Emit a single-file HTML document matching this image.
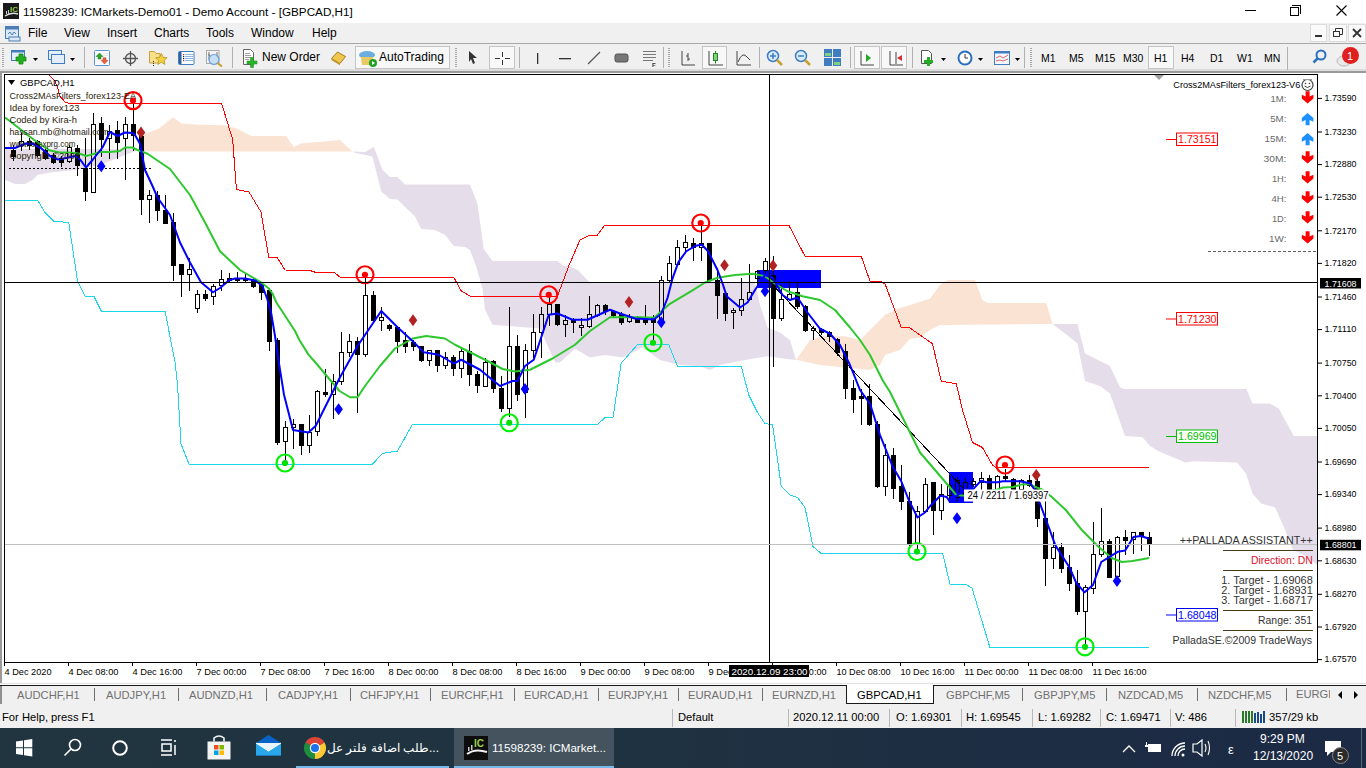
<!DOCTYPE html>
<html><head><meta charset="utf-8">
<style>
*{margin:0;padding:0;box-sizing:border-box}
html,body{width:1366px;height:768px;overflow:hidden;background:#fff;font-family:"Liberation Sans",sans-serif;position:relative}
.a{position:absolute;white-space:nowrap;line-height:1}
.mi{font-size:12px;color:#000;top:27px}
.tt{font-size:12px;top:51px;color:#000}
.tf{font-size:10.5px;top:53px;color:#000}
.sep{position:absolute;width:1px;height:22px;background:#c8c8c8;top:47px}
.tab{position:absolute;font-size:11.2px;color:#707070;top:690px;line-height:1;white-space:nowrap}
.tsep{position:absolute;width:1px;height:13px;background:#707070;top:688px}
.st{position:absolute;font-size:11.2px;color:#000;top:712px;line-height:1;white-space:nowrap}
.ssep{position:absolute;width:1px;height:18px;background:#b8b8b8;top:709px}
.pressed{position:absolute;top:47px;height:23px;border:1px solid #c4c4c4;background:#f7f7f7}
svg text{font-family:"Liberation Sans",sans-serif}
</style></head><body>
<!-- title bar -->
<div class="a" style="left:0;top:0;width:1366px;height:22px;background:#fff"></div>
<svg class="a" style="left:3px;top:3px" width="16" height="16"><rect width="16" height="16" fill="#1a1a1a"/><text x="7" y="9" font-size="8" font-weight="bold" fill="#8fc83c">IC</text><path d="M2 13 Q8 9 15 11" stroke="#ddd" stroke-width="1.5" fill="none"/><rect x="3" y="8" width="1" height="3" fill="#ccc"/><rect x="5" y="7" width="1" height="4" fill="#ccc"/></svg>
<div class="a" style="left:23px;top:6px;font-size:11.7px;color:#000">11598239: ICMarkets-Demo01 - Demo Account - [GBPCAD,H1]</div>
<div class="a" style="left:1245px;top:10px;width:11px;height:1px;background:#000"></div>
<div class="a" style="left:1290px;top:7px;width:9px;height:9px;border:1px solid #000"></div>
<div class="a" style="left:1292px;top:5px;width:9px;height:1px;background:#000"></div>
<div class="a" style="left:1300px;top:5px;width:1px;height:9px;background:#000"></div>
<svg class="a" style="left:1336px;top:5px" width="11" height="11"><path d="M0.5 0.5L10.5 10.5M10.5 0.5L0.5 10.5" stroke="#000" stroke-width="1.1"/></svg>
<!-- menu -->
<div class="a" style="left:0;top:23px;width:1366px;height:21px;background:#f0f0f0"></div>
<svg class="a" style="left:4px;top:25px" width="17" height="17"><rect x="1.5" y="1.5" width="13" height="12" fill="#dbe8f5" stroke="#4a7fb5"/><rect x="1.5" y="1.5" width="13" height="3" fill="#4a7fb5"/><path d="M4 9 l2 -2 2 3 2 -3 2 2" stroke="#4a7fb5" fill="none"/><rect x="5" y="12" width="11" height="4" fill="#dbe8f5" stroke="#4a7fb5"/></svg>
<div class="a mi" style="left:28px">File</div>
<div class="a mi" style="left:64px">View</div>
<div class="a mi" style="left:107px">Insert</div>
<div class="a mi" style="left:154px">Charts</div>
<div class="a mi" style="left:206px">Tools</div>
<div class="a mi" style="left:251px">Window</div>
<div class="a mi" style="left:312px">Help</div>
<!-- mdi buttons -->
<div class="a" style="left:1310px;top:24px;width:17px;height:18px;background:#fafafa;border:1px solid #dcdcdc"></div>
<div class="a" style="left:1315px;top:35px;width:7px;height:2px;background:#333"></div>
<div class="a" style="left:1329px;top:24px;width:18px;height:18px;background:#fafafa;border:1px solid #dcdcdc"></div>
<svg class="a" style="left:1333px;top:28px" width="10" height="10"><rect x="0.5" y="3.5" width="6" height="5" fill="none" stroke="#333"/><path d="M2.5 3.5V0.5H9.5V6.5H6.5" fill="none" stroke="#333"/></svg>
<div class="a" style="left:1348px;top:24px;width:18px;height:18px;background:#fafafa;border:1px solid #dcdcdc"></div>
<svg class="a" style="left:1352px;top:28px" width="10" height="10"><path d="M1 1L9 9M9 1L1 9" stroke="#333" stroke-width="1.8"/></svg>
<!-- toolbar -->
<div class="a" style="left:0;top:43px;width:1366px;height:1px;background:#a8a8a8"></div>
<div class="a" style="left:0;top:44px;width:1366px;height:27px;background:#f0f0f0"></div>
<div class="a" style="left:0;top:69px;width:1366px;height:2px;background:#dcdcdc"></div>
<svg class="a" style="left:0;top:44px" width="1366" height="27">
 <g fill="#a8a8a8">
  <rect x="2" y="4" width="2" height="1"/><rect x="2" y="6" width="2" height="1"/><rect x="2" y="8" width="2" height="1"/><rect x="2" y="10" width="2" height="1"/><rect x="2" y="12" width="2" height="1"/><rect x="2" y="14" width="2" height="1"/><rect x="2" y="16" width="2" height="1"/><rect x="2" y="18" width="2" height="1"/><rect x="2" y="20" width="2" height="1"/><rect x="2" y="22" width="2" height="1"/>
 </g>
 <!-- new chart -->
 <rect x="11.5" y="6.5" width="13" height="10" fill="#e4eefa" stroke="#3f7cc0"/><rect x="11.5" y="6.5" width="13" height="2" fill="#3f7cc0"/>
 <path d="M19 10h4v3h3v4h-3v3h-4v-3h-3v-4h3z" fill="#22b022" stroke="#118811" stroke-width="0.8"/>
 <path d="M33 14h5l-2.5 3z" fill="#000"/>
 <rect x="48.5" y="6.5" width="13" height="9" fill="#e4eefa" stroke="#3f7cc0"/><rect x="51.5" y="10.5" width="13" height="9" fill="#e4eefa" stroke="#3f7cc0"/>
 <path d="M70 14h5l-2.5 3z" fill="#000"/>
 <rect x="84" y="3" width="1" height="21" fill="#b0b0b0"/>
 <rect x="94.5" y="6.5" width="15" height="15" rx="1" fill="#fafcff" stroke="#5a94d8"/><path d="M96 12.5h2v2.5h3v-2.5h2l-3.5-3.5z" fill="#2aa52a" stroke="#1a7a1a" stroke-width="0.5"/><path d="M101 16.3h2v-2.5h3v2.5h2l-3.5 3.7z" fill="#e8603a" stroke="#b84020" stroke-width="0.5"/><path d="M103 9.5h5M103 11.5h5" stroke="#ddd" stroke-width="0.6"/>
 <circle cx="130.5" cy="14.5" r="5" fill="none" stroke="#555" stroke-width="1.3"/><path d="M130.5 7v15M123 14.5h15" stroke="#555" stroke-width="1.3"/>
 <path d="M149.5 7.5h5l1.5 2h4v9.5h-10.5z" fill="#f6e08a" stroke="#c8a040"/><path d="M153.5 17v5" stroke="#333" stroke-dasharray="1,1"/><path d="M161.4 9.5l1.7 3.8 4 .4-3 2.7.9 4-3.6-2.1-3.6 2.1.9-4-3-2.7 4-.4z" fill="#f4d03a" stroke="#b8902a" stroke-width="0.8"/>
 <rect x="178.5" y="7.5" width="15.5" height="13" rx="1" fill="#fff" stroke="#3f7cc0"/><rect x="179" y="8" width="2.5" height="12" fill="#2f5f9f"/><path d="M185 10.5h8M185 12.5h8M185 14.5h8M185 16.5h8" stroke="#8fb4e8" stroke-width="1"/><g fill="#e02020"><rect x="183" y="10" width="1.2" height="1.2"/><rect x="183" y="16" width="1.2" height="1.2"/></g><g fill="#222"><rect x="183" y="12" width="1.2" height="1.2"/><rect x="183" y="14" width="1.2" height="1.2"/></g>
 <rect x="206.5" y="6.5" width="12.5" height="13" fill="#f4f4f4" stroke="#aaa"/><path d="M209 8v8M208 11h2M217 8v6" stroke="#555" stroke-width="0.8"/><circle cx="214" cy="15.5" r="5" fill="rgba(190,220,245,0.85)" stroke="#6fa0d8" stroke-width="1.2"/><path d="M217.5 19l4.5 3.5" stroke="#c8a030" stroke-width="2.2"/>
 <rect x="232" y="3" width="1" height="21" fill="#b0b0b0"/>
 <path d="M243.5 5.5h7l3 3v12h-10z" fill="#fff" stroke="#666"/><path d="M245 9.5h5M245 11.5h6M245 13.5h6M245 15.5h4" stroke="#888" stroke-width="0.8"/><path d="M250.5 13.5h3v3.5h3.5v3h-3.5v3.5h-3v-3.5h-3.5v-3h3.5z" fill="#2ab52a" stroke="#1a8a1a" stroke-width="0.5"/>
 <path d="M331.5 14.5l6-6.5 8 4.5-5.5 7z" fill="#f0c850" stroke="#a87a18"/><path d="M331.5 14.5l8.5 5 0 1.8-8.5-5z" fill="#c89a30"/>
 <rect x="355.5" y="2.5" width="94" height="22" fill="#f8f8f8" stroke="#c4c4c4"/>
 <ellipse cx="367" cy="11" rx="8" ry="4" fill="#6aaee0"/><path d="M361 13h12l-1 8h-10z" fill="#e8c860"/><circle cx="373" cy="19" r="4" fill="#22a022"/><path d="M372 17l3 2-3 2z" fill="#fff"/>
 <g fill="#a8a8a8"><rect x="455" y="4" width="2" height="1"/><rect x="455" y="6" width="2" height="1"/><rect x="455" y="8" width="2" height="1"/><rect x="455" y="10" width="2" height="1"/><rect x="455" y="12" width="2" height="1"/><rect x="455" y="14" width="2" height="1"/><rect x="455" y="16" width="2" height="1"/><rect x="455" y="18" width="2" height="1"/><rect x="455" y="20" width="2" height="1"/><rect x="455" y="22" width="2" height="1"/></g>
 <path d="M469 7l8 7h-4l2 5-2 1-2-5-2 3z" fill="#333"/>
 <rect x="489.5" y="2.5" width="25" height="22" fill="#f8f8f8" stroke="#c4c4c4"/>
 <path d="M502.5 8v5M502.5 16v5M495 14.5h5M505 14.5h5" stroke="#333" stroke-width="1"/>
 <rect x="519" y="3" width="1" height="21" fill="#b0b0b0"/>
 <rect x="537" y="9" width="1.3" height="11" fill="#333"/>
 <rect x="559" y="14" width="12" height="1.3" fill="#333"/>
 <path d="M588 20L600 8" stroke="#555" stroke-width="1.3"/>
 <rect x="615" y="10" width="13" height="8" rx="2" fill="#777" stroke="#555"/>
 <g fill="#777"><rect x="643" y="7" width="13" height="1"/><rect x="643" y="10" width="13" height="1"/><rect x="643" y="13" width="13" height="1"/><rect x="643" y="16" width="10" height="1"/></g><text x="652" y="23" font-size="6" font-weight="bold" fill="#333">F</text>
 <rect x="663" y="3" width="1" height="21" fill="#b0b0b0"/>
 <g fill="#a8a8a8"><rect x="668" y="4" width="2" height="1"/><rect x="668" y="6" width="2" height="1"/><rect x="668" y="8" width="2" height="1"/><rect x="668" y="10" width="2" height="1"/><rect x="668" y="12" width="2" height="1"/><rect x="668" y="14" width="2" height="1"/><rect x="668" y="16" width="2" height="1"/><rect x="668" y="18" width="2" height="1"/><rect x="668" y="20" width="2" height="1"/><rect x="668" y="22" width="2" height="1"/></g>
 <!-- chart type icons -->
 <path d="M682 7v14h13M688 9v8M686 12h2M688 15h2" stroke="#444" fill="none"/>
 <rect x="702.5" y="2.5" width="24" height="22" fill="#f8f8f8" stroke="#c4c4c4"/>
 <path d="M709 7v14h14" stroke="#444" fill="none"/><rect x="713.5" y="9.5" width="4" height="7" fill="#7fd07f" stroke="#228822"/><path d="M715.5 7v2M715.5 16.5v3" stroke="#228822"/>
 <path d="M737 7v14h14M738 18q4 -10 8 -6l4 4" stroke="#444" fill="none"/>
 <rect x="759" y="3" width="1" height="21" fill="#b0b0b0"/>
 <circle cx="773" cy="12" r="5.5" fill="#d8ebfa" stroke="#3f7cc0" stroke-width="1.5"/><path d="M770 12h6M773 9v6" stroke="#3f7cc0" stroke-width="1.5"/><path d="M777 16l5 5" stroke="#c8a030" stroke-width="2.5"/>
 <circle cx="801" cy="12" r="5.5" fill="#d8ebfa" stroke="#3f7cc0" stroke-width="1.5"/><path d="M798 12h6" stroke="#3f7cc0" stroke-width="1.5"/><path d="M805 16l5 5" stroke="#c8a030" stroke-width="2.5"/>
 <rect x="824" y="5" width="8" height="8" fill="#3f7cc0"/><rect x="833" y="5" width="8" height="8" fill="#3f7cc0"/><rect x="824" y="14" width="8" height="8" fill="#3f7cc0"/><rect x="833" y="14" width="8" height="8" fill="#3f7cc0"/><rect x="825" y="9" width="6" height="3" fill="#7fd07f"/><rect x="834" y="18" width="6" height="3" fill="#7fd07f"/>
 <rect x="850" y="3" width="1" height="21" fill="#b0b0b0"/>
 <rect x="854.5" y="2.5" width="25" height="22" fill="#f8f8f8" stroke="#c4c4c4"/>
 <path d="M861 7v14h13" stroke="#444" fill="none"/><path d="M866 10l5 4-5 4z" fill="#22aa22"/>
 <rect x="881.5" y="2.5" width="25" height="22" fill="#f8f8f8" stroke="#c4c4c4"/>
 <path d="M890 7v14h13M896 8v12" stroke="#444" fill="none"/><path d="M897 14l5 -3v6z" fill="#d03030"/>
 <rect x="912" y="3" width="1" height="21" fill="#b0b0b0"/>
 <path d="M921.5 6.5h7l3 3v10h-10z" fill="#fff" stroke="#555"/><path d="M927 13h3v3h3v3h-3v3h-3v-3h-3v-3h3z" fill="#22b022"/>
 <path d="M941 14h5l-2.5 3z" fill="#000"/>
 <circle cx="965" cy="14" r="7.5" fill="#2a6fc0"/><circle cx="965" cy="14" r="5.5" fill="#fff"/><path d="M965 10v4h3" stroke="#333" fill="none"/>
 <path d="M978 14h5l-2.5 3z" fill="#000"/>
 <rect x="994.5" y="7.5" width="15" height="13" fill="#f4f8fc" stroke="#3f7cc0"/><rect x="994.5" y="7.5" width="15" height="2" fill="#3f7cc0"/><path d="M996 14l4-2 3 2 5-3M996 17l4-1 3 1 5-2" stroke="#d04040" stroke-width="0.8" fill="none"/>
 <path d="M1015 14h5l-2.5 3z" fill="#000"/>
 <rect x="1024" y="3" width="1" height="21" fill="#b0b0b0"/>
 <g fill="#a8a8a8"><rect x="1030" y="4" width="2" height="1"/><rect x="1030" y="6" width="2" height="1"/><rect x="1030" y="8" width="2" height="1"/><rect x="1030" y="10" width="2" height="1"/><rect x="1030" y="12" width="2" height="1"/><rect x="1030" y="14" width="2" height="1"/><rect x="1030" y="16" width="2" height="1"/><rect x="1030" y="18" width="2" height="1"/><rect x="1030" y="20" width="2" height="1"/><rect x="1030" y="22" width="2" height="1"/></g>
 <rect x="1148.5" y="2.5" width="25" height="22" fill="#f8f8f8" stroke="#c4c4c4"/>
 <rect x="1287" y="3" width="1" height="23" fill="#b0b0b0"/>
 <circle cx="1321" cy="11" r="4.5" fill="none" stroke="#2a6fc0" stroke-width="2"/><path d="M1317.5 14.5l-4 4" stroke="#2a6fc0" stroke-width="2.5"/>
 <ellipse cx="1344" cy="17" rx="7" ry="5" fill="#e8e8e8" stroke="#bbb"/><circle cx="1350.5" cy="11.5" r="8.5" fill="#e02020"/><text x="1347" y="16" font-size="11" fill="#fff">1</text>
</svg>
<div class="a tt" style="left:262px">New Order</div>
<div class="a tt" style="left:379px">AutoTrading</div>
<div class="a tf" style="left:1041px">M1</div>
<div class="a tf" style="left:1069px">M5</div>
<div class="a tf" style="left:1095px">M15</div>
<div class="a tf" style="left:1123px">M30</div>
<div class="a tf" style="left:1154px">H1</div>
<div class="a tf" style="left:1181px">H4</div>
<div class="a tf" style="left:1210px">D1</div>
<div class="a tf" style="left:1237px">W1</div>
<div class="a tf" style="left:1264px">MN</div>
<!-- chart window frame -->
<div class="a" style="left:0;top:71px;width:1366px;height:613px;background:#fff"></div>
<div class="a" style="left:0;top:71px;width:2px;height:613px;background:#9a9a9a"></div>
<div class="a" style="left:0;top:71px;width:1366px;height:2px;background:#9a9a9a"></div>
<svg class="a" style="left:0;top:0" width="1366" height="768">
<polygon points="5,149 141,149 110,161 100,165 75,170 50,172.5 37.5,175 32.5,180 25,184 15,184 5,180" fill="#E6DDEA"/>
<polygon points="141,149 143,134.7 159,128.5 173,117.3 181.7,123.5 199,124.8 224,125.2 236.4,128.5 251.4,136 286,136 293.7,147 301,143.4 340,140 352.5,151.5 141,151.5" fill="#FBE3D3"/>
<polygon points="352.5,151.5 365,152 373.75,147 377.5,156.5 382.5,170 390,177 397.5,177 405,184.5 470,184.5 477.5,204 483.75,249 492.5,261 557.5,261 563.75,266 567.5,266 577.5,269.75 590,282.5 755,282.5 760,305 767.5,327.5 780,332.5 790,340 796,360 796,360 785,358.75 767.5,356.25 745,360 720,365 710,370 700,366.25 680,365 675,363.75 660,360 642.5,347.5 622.5,357.5 605,355 590,357.5 575,348.75 560,362.5 555,362.25 540,328.5 492.5,324.75 485,309.75 482.5,288.5 476,266 470,250 465,247 453.75,246 445,235 435,230 421.25,229 415,216.5 397.5,199.5 390,199 381.25,191.5 372.5,156.5 355,152.75" fill="#E6DDEA"/>
<polygon points="796,360 810,340 822.5,336.25 845,336.25 860,340 870,330 885,315 897.5,308.75 910,305 930,298.75 940,285 947.5,280 975,280 982.5,300 987.5,303 1046.25,303 1052.5,324 940,325 930,330 920,337.5 910,338.75 900,350 885,355 880,365 870,370 820,365 797.5,360" fill="#FBE3D3"/>
<polygon points="1052.5,324 1077.5,324 1085,353.5 1100,361 1110,366 1120,387.25 1123.75,389 1246.25,389 1252.5,403.5 1270,403.5 1278.75,408.5 1293.75,436 1318,436 1318,565.4 1306.4,556.5 1293,549.8 1284,527.4 1275,507.2 1261.6,503.8 1252.6,493.8 1246,473.6 1237,462.4 1194.4,461.3 1185.4,462.4 1158,451 1149.6,445.6 1142.5,437.25 1125,436 1110,393.5 1100,386 1085,381 1077.5,343.5 1065,333.5" fill="#E6DDEA"/>
<rect x="757" y="270" width="64" height="18" fill="#0000FF"/>
<rect x="949" y="472" width="24" height="30" fill="#0000FF"/>
<line x1="9" y1="168.5" x2="153" y2="168.5" stroke="#000" stroke-width="1" stroke-dasharray="2,2"/>
<path d="M13.5 145V161M21.5 133V141M21.5 146V151M29.5 138V150M37.5 140V157M45.5 147V160M53.5 153V164M61.5 156V167M69.5 145V147M69.5 162V163M77.5 145V176M85.5 138V201M93.5 113V124M101.5 117V157M109.5 125V131M109.5 139V159M117.5 121V159M125.5 117V124M125.5 139V180M133.5 101V151M141.5 135V215M149.5 190V195M149.5 200V223M157.5 191V221M165.5 195V224M173.5 213V281M181.5 264V297M189.5 258V269M189.5 275V291M197.5 290V294M197.5 309V313M205.5 290V301M213.5 284V286M213.5 297V305M221.5 270V279M221.5 286V291M229.5 273V283M237.5 272V283M245.5 274V283M253.5 277V288M261.5 282V300M269.5 288V351M277.5 338V445M285.5 421V427M285.5 442V464M293.5 419V424M293.5 428V449M301.5 424V455M309.5 415V432M309.5 446V453M317.5 390V391M317.5 432V436M325.5 369V397M333.5 374V381M333.5 395V419M341.5 332V352M341.5 382V385M349.5 334V341M349.5 353V357M357.5 337V413M365.5 275V295M365.5 355V357M373.5 291V322M381.5 307V317M381.5 321V331M389.5 324V331M397.5 326V353M405.5 332V353M413.5 340V351M421.5 346V362M429.5 361V366M437.5 350V372M445.5 352V357M445.5 366V369M453.5 355V376M461.5 348V351M461.5 369V378M469.5 344V386M477.5 371V393M485.5 358V362M493.5 360V393M501.5 376V412M509.5 307V346M509.5 409V417M517.5 335V401M525.5 344V350M525.5 393V418M533.5 314V332M533.5 351V358M541.5 307V314M541.5 333V358M549.5 297V304M549.5 315V326M557.5 304V326M565.5 315V320M565.5 325V337M573.5 318V333M581.5 318V325M581.5 328V336M589.5 296V314M589.5 327V328M597.5 304V305M597.5 316V317M605.5 304V315M613.5 310V317M621.5 312V325M629.5 314V317M629.5 322V323M637.5 316V323M645.5 305V325M653.5 315V341M661.5 276V280M661.5 321V322M669.5 256V263M669.5 281V283M677.5 240V247M677.5 265V266M685.5 235V242M685.5 248V252M693.5 238V261M701.5 225V243M701.5 248V261M709.5 243V281M717.5 268V319M725.5 292V321M733.5 308V310M733.5 313V329M741.5 278V299M741.5 311V316M749.5 264V292M749.5 300V301M757.5 270V271M757.5 279V286M765.5 258V261M765.5 271V276M773.5 256V367M781.5 285V299M781.5 319V321M789.5 281V294M789.5 300V301M797.5 282V309M805.5 305V332M813.5 326V328M813.5 331V340M821.5 328V335M829.5 331V342M837.5 338V356M845.5 344V399M853.5 380V413M861.5 389V425M869.5 384V426M877.5 421V488M885.5 444V455M885.5 487V496M893.5 448V499M901.5 465V510M909.5 492V546M917.5 506V511M917.5 545V553M925.5 478V484M925.5 512V513M933.5 482V535M941.5 484V494M941.5 511V520M949.5 475V485M949.5 496V499M957.5 477V480M957.5 498V503M965.5 478V482M965.5 496V499M973.5 478V481M973.5 485V487M981.5 472V478M981.5 483V491M989.5 475V491M997.5 475V476M997.5 490V491M1005.5 469V481M1013.5 478V491M1021.5 479V480M1021.5 490V491M1029.5 475V487M1037.5 474V527M1045.5 501V586M1053.5 532V547M1053.5 559V569M1061.5 543V573M1069.5 555V591M1077.5 570V615M1085.5 585V587M1085.5 612V648M1093.5 522V554M1093.5 589V594M1101.5 508V541M1101.5 555V557M1109.5 539V578M1117.5 536V537M1125.5 530V555M1133.5 540V554M1141.5 532V551M1149.5 532V556" stroke="#000" stroke-width="1" fill="none"/>
<rect x="19.5" y="141.5" width="4" height="4" fill="none" stroke="#000" stroke-width="1"/><rect x="67.5" y="147.5" width="4" height="14" fill="none" stroke="#000" stroke-width="1"/><rect x="91.5" y="124.5" width="4" height="68" fill="none" stroke="#000" stroke-width="1"/><rect x="107.5" y="131.5" width="4" height="7" fill="none" stroke="#000" stroke-width="1"/><rect x="123.5" y="124.5" width="4" height="14" fill="none" stroke="#000" stroke-width="1"/><rect x="147.5" y="195.5" width="4" height="4" fill="none" stroke="#000" stroke-width="1"/><rect x="187.5" y="269.5" width="4" height="5" fill="none" stroke="#000" stroke-width="1"/><rect x="195.5" y="294.5" width="4" height="14" fill="none" stroke="#000" stroke-width="1"/><rect x="211.5" y="286.5" width="4" height="10" fill="none" stroke="#000" stroke-width="1"/><rect x="219.5" y="279.5" width="4" height="6" fill="none" stroke="#000" stroke-width="1"/><rect x="283.5" y="427.5" width="4" height="14" fill="none" stroke="#000" stroke-width="1"/><rect x="291.5" y="424.5" width="4" height="3" fill="none" stroke="#000" stroke-width="1"/><rect x="307.5" y="432.5" width="4" height="13" fill="none" stroke="#000" stroke-width="1"/><rect x="315.5" y="391.5" width="4" height="40" fill="none" stroke="#000" stroke-width="1"/><rect x="331.5" y="381.5" width="4" height="13" fill="none" stroke="#000" stroke-width="1"/><rect x="339.5" y="352.5" width="4" height="29" fill="none" stroke="#000" stroke-width="1"/><rect x="347.5" y="341.5" width="4" height="11" fill="none" stroke="#000" stroke-width="1"/><rect x="363.5" y="295.5" width="4" height="59" fill="none" stroke="#000" stroke-width="1"/><rect x="379.5" y="317.5" width="4" height="3" fill="none" stroke="#000" stroke-width="1"/><rect x="427.5" y="350.5" width="4" height="10" fill="none" stroke="#000" stroke-width="1"/><rect x="443.5" y="357.5" width="4" height="8" fill="none" stroke="#000" stroke-width="1"/><rect x="459.5" y="351.5" width="4" height="17" fill="none" stroke="#000" stroke-width="1"/><rect x="483.5" y="362.5" width="4" height="24" fill="none" stroke="#000" stroke-width="1"/><rect x="507.5" y="346.5" width="4" height="62" fill="none" stroke="#000" stroke-width="1"/><rect x="523.5" y="350.5" width="4" height="42" fill="none" stroke="#000" stroke-width="1"/><rect x="531.5" y="332.5" width="4" height="18" fill="none" stroke="#000" stroke-width="1"/><rect x="539.5" y="314.5" width="4" height="18" fill="none" stroke="#000" stroke-width="1"/><rect x="547.5" y="304.5" width="4" height="10" fill="none" stroke="#000" stroke-width="1"/><rect x="563.5" y="320.5" width="4" height="4" fill="none" stroke="#000" stroke-width="1"/><rect x="579.5" y="325.5" width="4" height="2" fill="none" stroke="#000" stroke-width="1"/><rect x="587.5" y="314.5" width="4" height="12" fill="none" stroke="#000" stroke-width="1"/><rect x="595.5" y="305.5" width="4" height="10" fill="none" stroke="#000" stroke-width="1"/><rect x="627.5" y="317.5" width="4" height="4" fill="none" stroke="#000" stroke-width="1"/><rect x="659.5" y="280.5" width="4" height="40" fill="none" stroke="#000" stroke-width="1"/><rect x="667.5" y="263.5" width="4" height="17" fill="none" stroke="#000" stroke-width="1"/><rect x="675.5" y="247.5" width="4" height="17" fill="none" stroke="#000" stroke-width="1"/><rect x="683.5" y="242.5" width="4" height="5" fill="none" stroke="#000" stroke-width="1"/><rect x="699.5" y="243.5" width="4" height="4" fill="none" stroke="#000" stroke-width="1"/><rect x="731.5" y="310.5" width="4" height="2" fill="none" stroke="#000" stroke-width="1"/><rect x="739.5" y="299.5" width="4" height="11" fill="none" stroke="#000" stroke-width="1"/><rect x="747.5" y="292.5" width="4" height="7" fill="none" stroke="#000" stroke-width="1"/><rect x="755.5" y="271.5" width="4" height="7" fill="none" stroke="#000" stroke-width="1"/><rect x="763.5" y="261.5" width="4" height="9" fill="none" stroke="#000" stroke-width="1"/><rect x="779.5" y="299.5" width="4" height="19" fill="none" stroke="#000" stroke-width="1"/><rect x="787.5" y="294.5" width="4" height="5" fill="none" stroke="#000" stroke-width="1"/><rect x="811.5" y="328.5" width="4" height="2" fill="none" stroke="#000" stroke-width="1"/><rect x="883.5" y="455.5" width="4" height="31" fill="none" stroke="#000" stroke-width="1"/><rect x="915.5" y="511.5" width="4" height="33" fill="none" stroke="#000" stroke-width="1"/><rect x="923.5" y="484.5" width="4" height="27" fill="none" stroke="#000" stroke-width="1"/><rect x="939.5" y="494.5" width="4" height="16" fill="none" stroke="#000" stroke-width="1"/><rect x="947.5" y="485.5" width="4" height="10" fill="none" stroke="#000" stroke-width="1"/><rect x="955.5" y="480.5" width="4" height="17" fill="none" stroke="#000" stroke-width="1"/><rect x="963.5" y="482.5" width="4" height="13" fill="none" stroke="#000" stroke-width="1"/><rect x="971.5" y="481.5" width="4" height="3" fill="none" stroke="#000" stroke-width="1"/><rect x="979.5" y="478.5" width="4" height="4" fill="none" stroke="#000" stroke-width="1"/><rect x="995.5" y="476.5" width="4" height="13" fill="none" stroke="#000" stroke-width="1"/><rect x="1019.5" y="480.5" width="4" height="9" fill="none" stroke="#000" stroke-width="1"/><rect x="1051.5" y="547.5" width="4" height="11" fill="none" stroke="#000" stroke-width="1"/><rect x="1083.5" y="587.5" width="4" height="24" fill="none" stroke="#000" stroke-width="1"/><rect x="1091.5" y="554.5" width="4" height="34" fill="none" stroke="#000" stroke-width="1"/><rect x="1099.5" y="541.5" width="4" height="13" fill="none" stroke="#000" stroke-width="1"/><rect x="1115.5" y="537.5" width="4" height="39" fill="none" stroke="#000" stroke-width="1"/><rect x="1131.5" y="532.5" width="4" height="7" fill="none" stroke="#000" stroke-width="1"/>
<path d="M11 150h5v7h-5zM27 141h5v5h-5zM35 141h5v15h-5zM43 150h5v9h-5zM51 155h5v8h-5zM59 158h5v5h-5zM75 148h5v18h-5zM83 168h5v24h-5zM99 123h5v17h-5zM115 130h5v13h-5zM131 124h5v12h-5zM139 136h5v64h-5zM155 195h5v16h-5zM163 210h5v14h-5zM171 222h5v44h-5zM179 264h5v11h-5zM203 294h5v5h-5zM227 278h5v3h-5zM235 278h5v3h-5zM243 278h5v3h-5zM251 280h5v7h-5zM259 284h5v9h-5zM267 290h5v52h-5zM275 340h5v103h-5zM299 424h5v22h-5zM323 392h5v3h-5zM355 341h5v14h-5zM371 295h5v26h-5zM387 325h5v4h-5zM395 327h5v15h-5zM403 340h5v7h-5zM411 342h5v5h-5zM419 346h5v15h-5zM435 350h5v16h-5zM451 357h5v12h-5zM467 351h5v24h-5zM475 374h5v12h-5zM491 361h5v28h-5zM499 388h5v21h-5zM515 346h5v49h-5zM555 304h5v21h-5zM571 320h5v3h-5zM603 305h5v7h-5zM611 311h5v5h-5zM619 314h5v9h-5zM635 317h5v6h-5zM643 317h5v6h-5zM651 318h5v5h-5zM691 243h5v5h-5zM707 243h5v38h-5zM715 280h5v16h-5zM723 293h5v21h-5zM771 275h5v44h-5zM795 292h5v15h-5zM803 306h5v25h-5zM819 329h5v4h-5zM827 332h5v5h-5zM835 339h5v14h-5zM843 351h5v38h-5zM851 388h5v12h-5zM859 396h5v3h-5zM867 396h5v29h-5zM875 424h5v63h-5zM891 455h5v34h-5zM899 486h5v16h-5zM907 501h5v44h-5zM931 482h5v29h-5zM987 478h5v12h-5zM1003 476h5v3h-5zM1011 479h5v11h-5zM1027 480h5v6h-5zM1035 481h5v38h-5zM1043 518h5v41h-5zM1059 547h5v22h-5zM1067 567h5v17h-5zM1075 583h5v29h-5zM1107 541h5v37h-5zM1123 537h5v4h-5zM1139 532h5v5h-5zM1147 537h5v8h-5z" fill="#000"/>
<polyline points="48.75,75 55,81.25 57.5,87.5 60,96.25 65,101.9 68,103 221.5,103 232.7,139.7 236.4,189.5 249,192 261,212 268.75,257.5 277.5,258 285,270 310,270.5 316,272.5 335,273 340,277.25 453.75,277.25 461.25,291 470,296 557.5,296 568.75,266 580,240 590,235 597.5,235 605,225 788.75,225 805,256.25 861.25,256.25 870,281.25 880,281.25 885,283.75 901.25,327.5 910,328 932.5,343.75 941.25,381.25 956.25,383.75 962.5,410 972.5,442.5 982.5,447.5 992.5,465 995,467 1148.75,467" fill="none" stroke="#FF0000" stroke-width="1" shape-rendering="crispEdges"/>
<polyline points="5,200 37.5,200 45,212.5 53.75,221.25 68.75,222.5 77.5,281 85,296 93.75,296 101.25,311 165,311 175,362 177.5,384 181,444 189,464 372.5,464 382.5,453.5 397.5,451 412.5,424.25 597.5,424.5 605,417.5 613,417.5 621.25,362.5 626.25,357.5 637.5,344.5 668.75,344.5 677.5,366.25 741.25,366.25 748.75,395 757.5,412.5 765,423.75 772.5,424.5 781.25,486.25 790,495 797.5,497.5 805,507.5 813,546.5 820.5,553 942.5,553 950,584 965,584 972,588 990,647.7 1148.7,647.7" fill="none" stroke="#1ED6EC" stroke-width="1" shape-rendering="crispEdges"/>
<line x1="770" y1="282" x2="964" y2="489" stroke="#000" stroke-width="1" shape-rendering="crispEdges"/>
<polyline points="5,117.5 15,125 28.75,136 41.25,145 50,150.6 60,152.5 70,152.5 80,153.75 86,156 90,155 100,152 110,152 120,151 125,147.5 132.5,147.5 137.5,150 147.5,153.75 170,169 190,195 205,222.5 220,251.25 240,270 261,282.25 268.75,288.5 272.5,293.5 276.25,302.25 295,331 299.4,340 308.5,354.6 315,362 339.5,391 350,397.25 357.5,397.25 365,386 380,366 395,348.5 412.5,338.5 426.25,336 445,338.5 455,344.75 470,352.25 490,362.25 502.5,369 515,371.5 530,369.75 552.5,358.5 575,344.75 590,331 610,317.25 640,317.25 654.2,317.7 669,304.4 692.5,290.3 705,282.5 717.5,277.8 735,275 752.5,273.75 765,276.25 775,283.75 787.5,291.25 802.5,296.25 820,300 835,310 850,327.5 860,340 870,355 882.5,380 890,392 907.5,427.5 920,452.5 935,470 950,487.5 956.25,495 964.4,495.8 997.7,489.6 1002.9,487.5 1013.3,487 1021.7,484.4 1030,483.9 1034.2,486.5 1042.5,489.6 1051.25,496.5 1065.8,510 1082.5,530.8 1099.2,547.5 1111.7,558 1122,562 1132.5,561 1149.2,558" fill="none" stroke="#2DC82D" stroke-width="2" stroke-linejoin="round"/>
<polyline points="5,148 15,148 25,143.75 32.5,143.75 41,148 50,156 57.5,159.4 66,158 75,156 80,159.4 86,167.5 92.5,160 102.5,147.5 110,132 117.5,136 125,132.5 132.5,133 135,135 140,143.75 145,170 152.5,186 157.5,197.5 170,215 180,242.5 190,262.5 201,282.25 213,292.25 220,288 228.75,280.4 235,278.5 245,278.5 255,280.4 262.5,286 267.5,299.75 271.25,313.5 275,336 278.75,362 284,394.7 293,430 308.5,432.6 315.8,425.7 339.5,378.3 357.5,346 381.25,311 397.5,327.25 412.5,341 423.75,352.25 438.75,354.75 453.75,363.5 461.25,359.75 480,369.75 500,386 512.5,381 517.5,381 525,366 533.75,359.75 540,341 548.75,314.75 557.5,313.5 572.5,319.75 587.5,319.75 610,309.75 620,313.5 635,318.5 653.75,319.5 661.25,313.75 667.5,298 672.2,279.4 678.4,262.2 686.25,251.25 695.6,245.8 701.9,244.7 708,251.25 717.5,270 722.2,282.5 726.9,296.6 740,307.5 747.5,302.5 755,290 765,275 772.5,277.5 782.5,295 790,300 797.5,297.5 807.5,312.5 820,328.75 830,333.75 840,345 850,365 860,390 870,403.75 880,435 892.5,466.25 901.25,481.25 908.75,500 917.5,517.5 925,512.5 930,506.25 940.4,495.8 946.7,496.9 949.3,501 965.4,489.6 972.7,489.6 981,480.7 986.25,482.3 997.7,482.3 1002.9,481.25 1019.6,481.25 1030,483.3 1034.2,489 1039.4,502 1047,522.5 1055.4,545.4 1070,568.3 1076.25,583 1084.6,592.3 1093,585 1101.25,562 1109.6,556.9 1118,551.7 1125.2,550.6 1133.5,537 1140.8,536 1149.2,538.75" fill="none" stroke="#0000FF" stroke-width="2" stroke-linejoin="round"/>
<circle cx="133" cy="100.6" r="8.5" fill="none" stroke="#FF0000" stroke-width="2.2"/><circle cx="133" cy="100.6" r="3.1" fill="#FF0000"/>
<circle cx="365" cy="274.75" r="8.5" fill="none" stroke="#FF0000" stroke-width="2.2"/><circle cx="365" cy="274.75" r="3.1" fill="#FF0000"/>
<circle cx="548.75" cy="294.75" r="8.5" fill="none" stroke="#FF0000" stroke-width="2.2"/><circle cx="548.75" cy="294.75" r="3.1" fill="#FF0000"/>
<circle cx="700.75" cy="223" r="8.5" fill="none" stroke="#FF0000" stroke-width="2.2"/><circle cx="700.75" cy="223" r="3.1" fill="#FF0000"/>
<circle cx="1005" cy="465" r="8.5" fill="none" stroke="#FF0000" stroke-width="2.2"/><circle cx="1005" cy="465" r="3.1" fill="#FF0000"/>
<circle cx="285" cy="463" r="8.5" fill="none" stroke="#00F000" stroke-width="2.2"/><circle cx="285" cy="463" r="3.1" fill="#00E000"/>
<circle cx="509.25" cy="422.75" r="8.5" fill="none" stroke="#00F000" stroke-width="2.2"/><circle cx="509.25" cy="422.75" r="3.1" fill="#00E000"/>
<circle cx="653" cy="342.75" r="8.5" fill="none" stroke="#00F000" stroke-width="2.2"/><circle cx="653" cy="342.75" r="3.1" fill="#00E000"/>
<circle cx="917" cy="551.5" r="8.5" fill="none" stroke="#00F000" stroke-width="2.2"/><circle cx="917" cy="551.5" r="3.1" fill="#00E000"/>
<circle cx="1085" cy="646.8" r="8.5" fill="none" stroke="#00F000" stroke-width="2.2"/><circle cx="1085" cy="646.8" r="3.1" fill="#00E000"/>
<polygon points="101.25,160.25 105.55,166.25 101.25,172.25 96.95,166.25" fill="#0000FF"/>
<polygon points="338.6,403.3 342.90000000000003,409.3 338.6,415.3 334.3,409.3" fill="#0000FF"/>
<polygon points="525,383 529.3,389 525,395 520.7,389" fill="#0000FF"/>
<polygon points="661.25,316.3 665.55,322.3 661.25,328.3 656.95,322.3" fill="#0000FF"/>
<polygon points="765,285.25 769.3,291.25 765,297.25 760.7,291.25" fill="#0000FF"/>
<polygon points="957,512.25 961.3,518.25 957,524.25 952.7,518.25" fill="#0000FF"/>
<polygon points="1117,575 1121.3,581 1117,587 1112.7,581" fill="#0000FF"/>
<polygon points="141,126.5 145.3,132.5 141,138.5 136.7,132.5" fill="#B22222"/>
<polygon points="413,314.25 417.3,320.25 413,326.25 408.7,320.25" fill="#B22222"/>
<polygon points="629,296 633.3,302 629,308 624.7,302" fill="#B22222"/>
<polygon points="724.5,259.3 728.8,265.3 724.5,271.3 720.2,265.3" fill="#B22222"/>
<polygon points="773,259.5 777.3,265.5 773,271.5 768.7,265.5" fill="#B22222"/>
<polygon points="1036.25,469 1040.55,475 1036.25,481 1031.95,475" fill="#B22222"/>
<line x1="5" y1="282.5" x2="1318" y2="282.5" stroke="#000" stroke-width="1"/>
<line x1="769.5" y1="75" x2="769.5" y2="662" stroke="#000" stroke-width="1"/>
<line x1="5" y1="544.5" x2="1318" y2="544.5" stroke="#C0C0C0" stroke-width="1"/>
<line x1="1208" y1="251.5" x2="1318" y2="251.5" stroke="#606060" stroke-width="1" stroke-dasharray="3,2"/>
<rect x="964" y="489.5" width="85" height="12" fill="#fff"/>
<line x1="949" y1="502.5" x2="973" y2="502.5" stroke="#0000FF"/>
<text x="967.5" y="499" font-size="10" fill="#000" textLength="81" lengthAdjust="spacingAndGlyphs">24 / 2211 / 1.69397</text>
<line x1="1166" y1="139.5" x2="1176" y2="139.5" stroke="#FF0000"/>
<rect x="1176.5" y="133" width="41" height="12.5" fill="#fff" stroke="#FF0000"/>
<text x="1178" y="143.3" font-size="10.5" fill="#FF0000" textLength="38.5" lengthAdjust="spacingAndGlyphs">1.73151</text>
<line x1="1166" y1="319.0" x2="1176" y2="319.0" stroke="#FF0000"/>
<rect x="1176.5" y="312.5" width="41" height="12.5" fill="#fff" stroke="#FF0000"/>
<text x="1178" y="322.8" font-size="10.5" fill="#FF0000" textLength="38.5" lengthAdjust="spacingAndGlyphs">1.71230</text>
<line x1="1166" y1="436.5" x2="1176" y2="436.5" stroke="#00C000"/>
<rect x="1176.5" y="430" width="41" height="12.5" fill="#fff" stroke="#00C000"/>
<text x="1178" y="440.3" font-size="10.5" fill="#00C000" textLength="38.5" lengthAdjust="spacingAndGlyphs">1.69969</text>
<line x1="1166" y1="615.0" x2="1176" y2="615.0" stroke="#0000FF"/>
<rect x="1176.5" y="608.5" width="41" height="12.5" fill="#fff" stroke="#0000FF"/>
<text x="1178" y="618.8" font-size="10.5" fill="#0000FF" textLength="38.5" lengthAdjust="spacingAndGlyphs">1.68048</text>
<rect x="4.5" y="74.5" width="1313" height="588" fill="none" stroke="#000" stroke-width="1"/>
<polygon points="1154,75 1164,75 1159,80" fill="#A0A0A0"/>
<line x1="1318" y1="98.4" x2="1322" y2="98.4" stroke="#000"/>
<text x="1324.5" y="101.2" font-size="9.5" fill="#000" textLength="32" lengthAdjust="spacingAndGlyphs">1.73590</text>
<line x1="1318" y1="132.0" x2="1322" y2="132.0" stroke="#000"/>
<text x="1324.5" y="134.8" font-size="9.5" fill="#000" textLength="32" lengthAdjust="spacingAndGlyphs">1.73230</text>
<line x1="1318" y1="164.6" x2="1322" y2="164.6" stroke="#000"/>
<text x="1324.5" y="167.4" font-size="9.5" fill="#000" textLength="32" lengthAdjust="spacingAndGlyphs">1.72880</text>
<line x1="1318" y1="197.2" x2="1322" y2="197.2" stroke="#000"/>
<text x="1324.5" y="200.0" font-size="9.5" fill="#000" textLength="32" lengthAdjust="spacingAndGlyphs">1.72530</text>
<line x1="1318" y1="230.8" x2="1322" y2="230.8" stroke="#000"/>
<text x="1324.5" y="233.6" font-size="9.5" fill="#000" textLength="32" lengthAdjust="spacingAndGlyphs">1.72170</text>
<line x1="1318" y1="263.4" x2="1322" y2="263.4" stroke="#000"/>
<text x="1324.5" y="266.2" font-size="9.5" fill="#000" textLength="32" lengthAdjust="spacingAndGlyphs">1.71820</text>
<line x1="1318" y1="297.0" x2="1322" y2="297.0" stroke="#000"/>
<text x="1324.5" y="299.8" font-size="9.5" fill="#000" textLength="32" lengthAdjust="spacingAndGlyphs">1.71460</text>
<line x1="1318" y1="329.6" x2="1322" y2="329.6" stroke="#000"/>
<text x="1324.5" y="332.4" font-size="9.5" fill="#000" textLength="32" lengthAdjust="spacingAndGlyphs">1.71110</text>
<line x1="1318" y1="363.1" x2="1322" y2="363.1" stroke="#000"/>
<text x="1324.5" y="365.9" font-size="9.5" fill="#000" textLength="32" lengthAdjust="spacingAndGlyphs">1.70750</text>
<line x1="1318" y1="395.8" x2="1322" y2="395.8" stroke="#000"/>
<text x="1324.5" y="398.6" font-size="9.5" fill="#000" textLength="32" lengthAdjust="spacingAndGlyphs">1.70400</text>
<line x1="1318" y1="428.4" x2="1322" y2="428.4" stroke="#000"/>
<text x="1324.5" y="431.2" font-size="9.5" fill="#000" textLength="32" lengthAdjust="spacingAndGlyphs">1.70050</text>
<line x1="1318" y1="462.0" x2="1322" y2="462.0" stroke="#000"/>
<text x="1324.5" y="464.8" font-size="9.5" fill="#000" textLength="32" lengthAdjust="spacingAndGlyphs">1.69690</text>
<line x1="1318" y1="494.6" x2="1322" y2="494.6" stroke="#000"/>
<text x="1324.5" y="497.4" font-size="9.5" fill="#000" textLength="32" lengthAdjust="spacingAndGlyphs">1.69340</text>
<line x1="1318" y1="528.1" x2="1322" y2="528.1" stroke="#000"/>
<text x="1324.5" y="530.9" font-size="9.5" fill="#000" textLength="32" lengthAdjust="spacingAndGlyphs">1.68980</text>
<line x1="1318" y1="560.8" x2="1322" y2="560.8" stroke="#000"/>
<text x="1324.5" y="563.6" font-size="9.5" fill="#000" textLength="32" lengthAdjust="spacingAndGlyphs">1.68630</text>
<line x1="1318" y1="594.3" x2="1322" y2="594.3" stroke="#000"/>
<text x="1324.5" y="597.1" font-size="9.5" fill="#000" textLength="32" lengthAdjust="spacingAndGlyphs">1.68270</text>
<line x1="1318" y1="627.0" x2="1322" y2="627.0" stroke="#000"/>
<text x="1324.5" y="629.8" font-size="9.5" fill="#000" textLength="32" lengthAdjust="spacingAndGlyphs">1.67920</text>
<line x1="1318" y1="659.6" x2="1322" y2="659.6" stroke="#000"/>
<text x="1324.5" y="662.4" font-size="9.5" fill="#000" textLength="32" lengthAdjust="spacingAndGlyphs">1.67570</text>
<rect x="1320" y="278" width="41" height="10.5" fill="#000"/>
<text x="1324.5" y="286.5" font-size="9.5" fill="#fff" textLength="32" lengthAdjust="spacingAndGlyphs">1.71608</text>
<rect x="1320" y="539.8" width="41" height="10.5" fill="#000"/>
<text x="1324.5" y="548.3" font-size="9.5" fill="#fff" textLength="32" lengthAdjust="spacingAndGlyphs">1.68801</text>
<line x1="4.5" y1="662" x2="4.5" y2="666" stroke="#000"/>
<text x="4.5" y="675" font-size="9.5" fill="#000" textLength="47" lengthAdjust="spacingAndGlyphs">4 Dec 2020</text>
<line x1="68.5" y1="662" x2="68.5" y2="666" stroke="#000"/>
<text x="68.5" y="675" font-size="9.5" fill="#000" textLength="50" lengthAdjust="spacingAndGlyphs">4 Dec 08:00</text>
<line x1="132.5" y1="662" x2="132.5" y2="666" stroke="#000"/>
<text x="132.5" y="675" font-size="9.5" fill="#000" textLength="50" lengthAdjust="spacingAndGlyphs">4 Dec 16:00</text>
<line x1="196.5" y1="662" x2="196.5" y2="666" stroke="#000"/>
<text x="196.5" y="675" font-size="9.5" fill="#000" textLength="50" lengthAdjust="spacingAndGlyphs">7 Dec 00:00</text>
<line x1="260.5" y1="662" x2="260.5" y2="666" stroke="#000"/>
<text x="260.5" y="675" font-size="9.5" fill="#000" textLength="50" lengthAdjust="spacingAndGlyphs">7 Dec 08:00</text>
<line x1="324.5" y1="662" x2="324.5" y2="666" stroke="#000"/>
<text x="324.5" y="675" font-size="9.5" fill="#000" textLength="50" lengthAdjust="spacingAndGlyphs">7 Dec 16:00</text>
<line x1="388.5" y1="662" x2="388.5" y2="666" stroke="#000"/>
<text x="388.5" y="675" font-size="9.5" fill="#000" textLength="50" lengthAdjust="spacingAndGlyphs">8 Dec 00:00</text>
<line x1="452.5" y1="662" x2="452.5" y2="666" stroke="#000"/>
<text x="452.5" y="675" font-size="9.5" fill="#000" textLength="50" lengthAdjust="spacingAndGlyphs">8 Dec 08:00</text>
<line x1="516.5" y1="662" x2="516.5" y2="666" stroke="#000"/>
<text x="516.5" y="675" font-size="9.5" fill="#000" textLength="50" lengthAdjust="spacingAndGlyphs">8 Dec 16:00</text>
<line x1="580.5" y1="662" x2="580.5" y2="666" stroke="#000"/>
<text x="580.5" y="675" font-size="9.5" fill="#000" textLength="50" lengthAdjust="spacingAndGlyphs">9 Dec 00:00</text>
<line x1="644.5" y1="662" x2="644.5" y2="666" stroke="#000"/>
<text x="644.5" y="675" font-size="9.5" fill="#000" textLength="50" lengthAdjust="spacingAndGlyphs">9 Dec 08:00</text>
<line x1="708.5" y1="662" x2="708.5" y2="666" stroke="#000"/>
<text x="708.5" y="675" font-size="9.5" fill="#000" textLength="50" lengthAdjust="spacingAndGlyphs">9 Dec 16:00</text>
<line x1="772.5" y1="662" x2="772.5" y2="666" stroke="#000"/>
<text x="772.5" y="675" font-size="9.5" fill="#000" textLength="54" lengthAdjust="spacingAndGlyphs">10 Dec 00:00</text>
<line x1="836.5" y1="662" x2="836.5" y2="666" stroke="#000"/>
<text x="836.5" y="675" font-size="9.5" fill="#000" textLength="54" lengthAdjust="spacingAndGlyphs">10 Dec 08:00</text>
<line x1="900.5" y1="662" x2="900.5" y2="666" stroke="#000"/>
<text x="900.5" y="675" font-size="9.5" fill="#000" textLength="54" lengthAdjust="spacingAndGlyphs">10 Dec 16:00</text>
<line x1="964.5" y1="662" x2="964.5" y2="666" stroke="#000"/>
<text x="964.5" y="675" font-size="9.5" fill="#000" textLength="54" lengthAdjust="spacingAndGlyphs">11 Dec 00:00</text>
<line x1="1028.5" y1="662" x2="1028.5" y2="666" stroke="#000"/>
<text x="1028.5" y="675" font-size="9.5" fill="#000" textLength="54" lengthAdjust="spacingAndGlyphs">11 Dec 08:00</text>
<line x1="1092.5" y1="662" x2="1092.5" y2="666" stroke="#000"/>
<text x="1092.5" y="675" font-size="9.5" fill="#000" textLength="54" lengthAdjust="spacingAndGlyphs">11 Dec 16:00</text>
<rect x="729" y="665" width="80" height="12" fill="#000"/>
<text x="731.5" y="675" font-size="9.5" fill="#fff" textLength="76" lengthAdjust="spacingAndGlyphs">2020.12.09 23:00</text>
<polygon points="8,80 15,80 11.5,85" fill="#000"/>
<text x="20" y="86" font-size="9.5" fill="#000" textLength="54.6" lengthAdjust="spacingAndGlyphs">GBPCAD,H1</text>
<text x="9.4" y="99.3" font-size="9.5" fill="#2b1d0e" textLength="126.6" lengthAdjust="spacingAndGlyphs">Cross2MAsFilters_forex123-EA</text>
<text x="9.4" y="110.8" font-size="9.5" fill="#2b1d0e" textLength="70" lengthAdjust="spacingAndGlyphs">Idea by forex123</text>
<text x="9.4" y="122.7" font-size="9.5" fill="#2b1d0e" textLength="67.5" lengthAdjust="spacingAndGlyphs">Coded by Kira-h</text>
<text x="9.4" y="134.8" font-size="9.5" fill="#2b1d0e" textLength="99.4" lengthAdjust="spacingAndGlyphs">hassan.mb@hotmail.com</text>
<text x="9.4" y="147" font-size="9.5" fill="#2b1d0e" textLength="66" lengthAdjust="spacingAndGlyphs">www.forexprg.com</text>
<text x="9.4" y="159.3" font-size="9.5" fill="#2b1d0e" textLength="70.6" lengthAdjust="spacingAndGlyphs">Copyright ©2008</text>
<text x="1173.3" y="87.5" font-size="9.5" fill="#000" textLength="127" lengthAdjust="spacingAndGlyphs">Cross2MAsFilters_forex123-V6</text>
<circle cx="1307.5" cy="85" r="5.5" fill="none" stroke="#444" stroke-width="1.2"/><path d="M1304.5 86q3 3 6 0" stroke="#444" fill="none"/><circle cx="1305.5" cy="83.5" r="0.8" fill="#444"/><circle cx="1309.5" cy="83.5" r="0.8" fill="#444"/><path d="M1303 79.5h9" stroke="#999" stroke-width="1"/>
<text x="1270.6" y="101.8" font-size="9.8" fill="#6a6a6a" textLength="15.8" lengthAdjust="spacingAndGlyphs">1M:</text>
<path d="M1305.6 91.3L1309.6 91.3L1309.6 96.6L1313.4 94.7L1313.4 98.4L1307.6 103.6L1301.8 98.4L1301.8 94.7L1305.6 96.6Z" fill="#FF0000"/>
<text x="1270.2" y="121.8" font-size="9.8" fill="#6a6a6a" textLength="16.2" lengthAdjust="spacingAndGlyphs">5M:</text>
<path d="M1305.6 125.2L1309.6 125.2L1309.6 119.9L1313.4 121.8L1313.4 118.1L1307.6 112.9L1301.8 118.1L1301.8 121.8L1305.6 119.9Z" fill="#1E90FF"/>
<text x="1264.6" y="141.8" font-size="9.8" fill="#6a6a6a" textLength="21.8" lengthAdjust="spacingAndGlyphs">15M:</text>
<path d="M1305.6 145.2L1309.6 145.2L1309.6 139.9L1313.4 141.8L1313.4 138.1L1307.6 132.9L1301.8 138.1L1301.8 141.8L1305.6 139.9Z" fill="#1E90FF"/>
<text x="1263.6" y="161.8" font-size="9.8" fill="#6a6a6a" textLength="22.8" lengthAdjust="spacingAndGlyphs">30M:</text>
<path d="M1305.6 151.3L1309.6 151.3L1309.6 156.6L1313.4 154.7L1313.4 158.4L1307.6 163.6L1301.8 158.4L1301.8 154.7L1305.6 156.6Z" fill="#FF0000"/>
<text x="1271.9" y="181.8" font-size="9.8" fill="#6a6a6a" textLength="14.5" lengthAdjust="spacingAndGlyphs">1H:</text>
<path d="M1305.6 171.3L1309.6 171.3L1309.6 176.6L1313.4 174.7L1313.4 178.4L1307.6 183.6L1301.8 178.4L1301.8 174.7L1305.6 176.6Z" fill="#FF0000"/>
<text x="1271.4" y="201.8" font-size="9.8" fill="#6a6a6a" textLength="15" lengthAdjust="spacingAndGlyphs">4H:</text>
<path d="M1305.6 191.3L1309.6 191.3L1309.6 196.6L1313.4 194.7L1313.4 198.4L1307.6 203.6L1301.8 198.4L1301.8 194.7L1305.6 196.6Z" fill="#FF0000"/>
<text x="1271.9" y="221.8" font-size="9.8" fill="#6a6a6a" textLength="14.5" lengthAdjust="spacingAndGlyphs">1D:</text>
<path d="M1305.6 211.3L1309.6 211.3L1309.6 216.6L1313.4 214.7L1313.4 218.4L1307.6 223.6L1301.8 218.4L1301.8 214.7L1305.6 216.6Z" fill="#FF0000"/>
<text x="1269.0" y="241.8" font-size="9.8" fill="#6a6a6a" textLength="17.4" lengthAdjust="spacingAndGlyphs">1W:</text>
<path d="M1305.6 231.3L1309.6 231.3L1309.6 236.6L1313.4 234.7L1313.4 238.4L1307.6 243.6L1301.8 238.4L1301.8 234.7L1305.6 236.6Z" fill="#FF0000"/>
<text x="1179.8" y="544.2" font-size="10.5" fill="#333" textLength="133" lengthAdjust="spacingAndGlyphs">++PALLADA ASSISTANT++</text>
<line x1="1223" y1="550.5" x2="1313" y2="550.5" stroke="#4a3a1a" stroke-width="1"/>
<line x1="1223" y1="570.5" x2="1313" y2="570.5" stroke="#4a3a1a" stroke-width="1"/>
<line x1="1223" y1="610.5" x2="1313" y2="610.5" stroke="#4a3a1a" stroke-width="1"/>
<line x1="1223" y1="630.5" x2="1313" y2="630.5" stroke="#4a3a1a" stroke-width="1"/>
<text x="1250.9" y="564.4" font-size="10.5" fill="#E0102A" textLength="61.8" lengthAdjust="spacingAndGlyphs">Direction: DN</text>
<text x="1221.3" y="584" font-size="10.5" fill="#333" textLength="91.4" lengthAdjust="spacingAndGlyphs">1. Target - 1.69068</text>
<text x="1221.3" y="594" font-size="10.5" fill="#333" textLength="91.4" lengthAdjust="spacingAndGlyphs">2. Target - 1.68931</text>
<text x="1221.3" y="604" font-size="10.5" fill="#333" textLength="91.4" lengthAdjust="spacingAndGlyphs">3. Target - 1.68717</text>
<text x="1258" y="624.3" font-size="10.5" fill="#333" textLength="54" lengthAdjust="spacingAndGlyphs">Range: 351</text>
<text x="1172.5" y="644.2" font-size="10.5" fill="#333" textLength="139.5" lengthAdjust="spacingAndGlyphs">PalladaSE.©2009 TradeWays</text>
</svg>
<!-- tabs -->
<div class="a" style="left:0;top:683px;width:1366px;height:1px;background:#e3e3e3"></div>
<div class="a" style="left:0;top:684px;width:1366px;height:1px;background:#fff"></div>
<div class="a" style="left:0;top:685px;width:1366px;height:1px;background:#1a1a1a"></div>
<div class="a" style="left:0;top:686px;width:1366px;height:19px;background:#f0f0f0"></div>
<div class="a" style="left:0;top:686px;width:2px;height:18px;background:#909090"></div>
<div class="a" style="left:846px;top:685px;width:88px;height:19px;background:#fff;border:1px solid #1a1a1a;border-top:none"></div>
<div class="tab" style="left:17px">AUDCHF,H1</div><div class="tsep" style="left:94px"></div>
<div class="tab" style="left:106px">AUDJPY,H1</div><div class="tsep" style="left:178px"></div>
<div class="tab" style="left:189px">AUDNZD,H1</div><div class="tsep" style="left:266px"></div>
<div class="tab" style="left:278px">CADJPY,H1</div><div class="tsep" style="left:350px"></div>
<div class="tab" style="left:360px">CHFJPY,H1</div><div class="tsep" style="left:430px"></div>
<div class="tab" style="left:441px">EURCHF,H1</div><div class="tsep" style="left:514px"></div>
<div class="tab" style="left:524px">EURCAD,H1</div><div class="tsep" style="left:598px"></div>
<div class="tab" style="left:608px">EURJPY,H1</div><div class="tsep" style="left:678px"></div>
<div class="tab" style="left:688px">EURAUD,H1</div><div class="tsep" style="left:762px"></div>
<div class="tab" style="left:772px">EURNZD,H1</div>
<div class="tab" style="left:857px;color:#000">GBPCAD,H1</div>
<div class="tab" style="left:946px">GBPCHF,M5</div><div class="tsep" style="left:1022px"></div>
<div class="tab" style="left:1034px">GBPJPY,M5</div><div class="tsep" style="left:1106px"></div>
<div class="tab" style="left:1118px">NZDCAD,M5</div><div class="tsep" style="left:1197px"></div>
<div class="tab" style="left:1208px">NZDCHF,M5</div><div class="tsep" style="left:1286px"></div>
<div class="a" style="left:1296px;top:686px;width:34px;height:18px;overflow:hidden"><div class="tab" style="left:0;top:3px">EURGBP</div></div>
<svg class="a" style="left:1330px;top:686px" width="36" height="18"><path d="M8 9l4-4v8z" fill="#000"/><path d="M28 9l-4-4v8z" fill="#000"/></svg>
<!-- status -->
<div class="a" style="left:0;top:705px;width:1366px;height:23px;background:#f0f0f0"></div>
<div class="st" style="left:2px">For Help, press F1</div>
<div class="ssep" style="left:672px"></div><div class="st" style="left:678px">Default</div>
<div class="ssep" style="left:788px"></div><div class="st" style="left:793px">2020.12.11 00:00</div>
<div class="ssep" style="left:889px"></div><div class="st" style="left:896px">O: 1.69301</div>
<div class="ssep" style="left:961px"></div><div class="st" style="left:966px">H: 1.69545</div>
<div class="ssep" style="left:1032px"></div><div class="st" style="left:1038px">L: 1.69282</div>
<div class="ssep" style="left:1100px"></div><div class="st" style="left:1106px">C: 1.69471</div>
<div class="ssep" style="left:1170px"></div><div class="st" style="left:1175px">V: 486</div>
<div class="ssep" style="left:1235px"></div>
<svg class="a" style="left:1242px;top:710px" width="24" height="14"><g fill="#2a7a2a"><rect x="0" y="1" width="2" height="12"/><rect x="3" y="1" width="2" height="12"/><rect x="6" y="1" width="2" height="12"/><rect x="9" y="1" width="2" height="12"/></g><g fill="#1a4a8a"><rect x="12" y="3" width="2" height="10"/><rect x="15" y="2" width="2" height="11"/><rect x="18" y="4" width="2" height="9"/><rect x="21" y="1" width="2" height="12"/></g></svg>
<div class="st" style="left:1269px">357/29 kb</div>
<!-- taskbar -->
<div class="a" style="left:0;top:728px;width:1366px;height:40px;background:linear-gradient(90deg,#203540 0%,#1f3340 40%,#1d2d43 75%,#1c2a45 100%)"></div>
<div class="a" style="left:454px;top:728px;width:160px;height:40px;background:#44535e"></div>
<div class="a" style="left:296px;top:766px;width:153px;height:2px;background:#76b9ed"></div>
<div class="a" style="left:454px;top:766px;width:160px;height:2px;background:#76b9ed"></div>
<svg class="a" style="left:0;top:728px" width="1366" height="40">
 <g fill="#fff"><path d="M16 13.5l7-1v6.8h-7z"/><path d="M24 12.3l8.3-1.2v8.2h-8.3z"/><path d="M16 20.2h7v6.8l-7-1z"/><path d="M24 20.2h8.3v8.2l-8.3-1.2z"/></g>
 <circle cx="75" cy="17" r="5.5" fill="none" stroke="#fff" stroke-width="1.6"/><path d="M71 21l-6.5 6.5" stroke="#fff" stroke-width="1.6"/>
 <circle cx="120" cy="20" r="6.8" fill="none" stroke="#fff" stroke-width="2"/>
 <path d="M161 12h11M161 27h11M162 16h9v7h-9z" stroke="#fff" stroke-width="1.5" fill="none"/><path d="M175 12v2M175 17v10" stroke="#fff" stroke-width="1.5"/>
 <path d="M207.5 13.5h23v18h-23z" fill="#f4f4f4"/><path d="M214 13.5v-3.5q5-4 10 0v3.5" stroke="#f4f4f4" stroke-width="1.6" fill="none"/><rect x="214" y="17" width="4.5" height="4.5" fill="#f25022"/><rect x="219.5" y="17" width="4.5" height="4.5" fill="#7fba00"/><rect x="214" y="22.5" width="4.5" height="4.5" fill="#00a4ef"/><rect x="219.5" y="22.5" width="4.5" height="4.5" fill="#ffb900"/>
 <path d="M256 15l12.5-8 12.5 8v12.5h-25z" fill="#0a64c8"/><path d="M256 15h25v12.5h-25z" fill="#28a8ea"/><path d="M256 15l12.5 8 12.5-8" fill="#e8f4fc" stroke="#fff"/>
 <path d="M315 20L305.47 14.5A11 11 0 0 1 324.53 14.5Z" fill="#db4437"/><path d="M315 20L324.53 14.5A11 11 0 0 1 315 31Z" fill="#fcc934"/><path d="M315 20L315 31A11 11 0 0 1 305.47 14.5Z" fill="#1e8e3e"/><circle cx="315" cy="20" r="5.2" fill="#fff"/><circle cx="315" cy="20" r="4" fill="#1a73e8"/>
 <rect x="464" y="8" width="24" height="24" fill="#0d0d0d"/><text x="474" y="19" font-size="10" font-weight="bold" fill="#9bd043">IC</text><path d="M467 26q8-6 20-2" stroke="#eee" stroke-width="2" fill="none"/><rect x="468" y="19" width="1.5" height="4" fill="#ccc"/><rect x="471" y="17" width="1.5" height="5" fill="#ccc"/>
 <path d="M1123 24l6-6 6 6" stroke="#fff" stroke-width="1.3" fill="none"/>
 <rect x="1148" y="16" width="13" height="8" fill="#fff"/><rect x="1145" y="17" width="3" height="2" fill="#fff"/><rect x="1146" y="14" width="1" height="3" fill="#fff"/>
 <path d="M1172 28a13 13 0 0 1 13-13M1175 28a10 10 0 0 1 10-10M1178 28a7 7 0 0 1 7-7" stroke="#fff" stroke-width="1.3" fill="none"/><circle cx="1183" cy="27" r="1.5" fill="#fff"/>
 <path d="M1193 16h4l5-4v16l-5-4h-4z" fill="none" stroke="#fff" stroke-width="1.2"/><path d="M1205 16q2 4 0 8M1208 13q3 7 0 14" stroke="#fff" stroke-width="1.1" fill="none"/>
 <path d="M1325 13h16v11h-10l-4 4v-4h-2z" fill="#fff"/><circle cx="1340.5" cy="27.5" r="8" fill="#2b2b2b" stroke="#888" stroke-width="1"/><text x="1337" y="32" font-size="11" fill="#fff">5</text>
 <rect x="1361" y="0" width="1" height="40" fill="#5a6678"/>
</svg>
<div class="a" style="left:331px;top:742px;font-size:12px;color:#fff;direction:rtl;width:108px;text-align:right">...طلب اضافة فلتر عل</div>
<div class="a" style="left:492px;top:742px;font-size:11.6px;color:#fff">11598239: ICMarket...</div>
<div class="a" style="left:1228px;top:743px;font-size:13px;color:#fff">ε</div>
<div class="a" style="left:1260px;top:733px;font-size:12px;color:#fff">9:29 PM</div>
<div class="a" style="left:1253px;top:750px;font-size:12px;color:#fff">12/13/2020</div>
</body></html>
